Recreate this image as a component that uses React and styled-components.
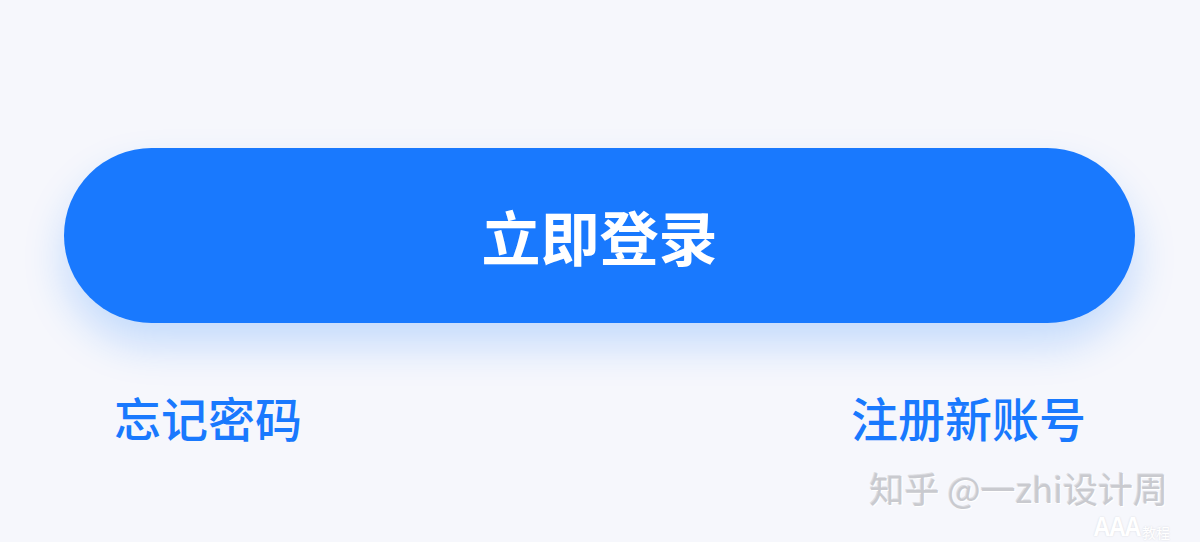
import styled, { createGlobalStyle } from "styled-components";

const GlobalStyle = createGlobalStyle`
  html, body {
    margin: 0;
    padding: 0;
    background: #f6f7fc;
  }
  body {
    font-family: "Noto Sans CJK SC", "Noto Sans", sans-serif;
  }
`;

const Page = styled.div`
  position: relative;
  width: 1200px;
  height: 542px;
  overflow: hidden;
  background: #f6f7fc;
  padding: 148px 65px 0 64px;
  box-sizing: border-box;
`;

const LoginButton = styled.button`
  display: flex;
  align-items: center;
  justify-content: center;
  width: 100%;
  height: 175px;
  border: none;
  border-radius: 88px;
  background: #1979fe;
  color: #fff;
  font-family: inherit;
  font-size: 59px;
  font-weight: 700;
  box-shadow: 0 22px 40px rgba(25, 121, 254, 0.22);
  cursor: pointer;
  padding-bottom: 2px;
`;

const Links = styled.div`
  display: flex;
  justify-content: space-between;
  padding: 67px 49px 0 50px;
`;

const TextLink = styled.a`
  color: #1979fe;
  font-size: 47px;
  font-weight: 500;
  line-height: 54px;
  text-decoration: none;
  cursor: pointer;
`;

const Watermark = styled.div`
  position: absolute;
  right: 32px;
  bottom: 36px;
  color: #c9cacf;
  font-size: 35px;
  line-height: 36px;
  text-shadow: 1px 1px 0 #fff, -1px -1px 0 #dcdde2;
  white-space: nowrap;
`;

const Stamp = styled.div`
  position: absolute;
  right: 30px;
  bottom: 0;
  display: flex;
  align-items: flex-end;
  gap: 2px;
  color: #ffffff;
  text-shadow: 0 0 2px #d6d7dd;
`;

const StampMark = styled.span`
  font-family: "Liberation Sans", sans-serif;
  font-size: 28px;
  font-weight: 700;
  line-height: 30px;
  letter-spacing: -2px;
  transform: scaleX(0.85);
  transform-origin: right bottom;
`;

const StampLabel = styled.span`
  font-size: 14px;
  line-height: 20px;
`;

export default function App() {
  return (
    <>
      <GlobalStyle />
      <Page>
        <LoginButton>立即登录</LoginButton>
        <Links>
          <TextLink>忘记密码</TextLink>
          <TextLink>注册新账号</TextLink>
        </Links>
        <Watermark>知乎 @一zhi设计周</Watermark>
        <Stamp>
          <StampMark>AAA</StampMark>
          <StampLabel>教程</StampLabel>
        </Stamp>
      </Page>
    </>
  );
}
